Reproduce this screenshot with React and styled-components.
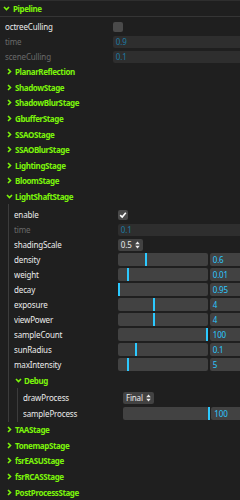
import React from "react";
import styled, { createGlobalStyle } from "styled-components";

const GlobalStyle = createGlobalStyle`
  html, body {
    margin: 0;
    padding: 0;
    background: #1f1f1f;
    overflow: hidden;
  }
  body {
    font-family: "Noto Sans", "Open Sans", sans-serif;
    font-size: 8px;
    letter-spacing: -0.15px;
    color: #ebebeb;
  }
`;

const Gui = styled.div`
  width: 250px;
  background: #1f1f1f;
`;

const RootTitle = styled.div`
  display: flex;
  align-items: center;
  gap: 3px;
  height: 15px;
  padding-left: 3px;
  border-top: 1px solid #2e2e2e;
  border-bottom: 1px solid #353535;
  color: #7cf50a;
  font-weight: 700;
  letter-spacing: -0.4px;
`;

const RootChildren = styled.div`
  padding: 2px 0 0 5px;
`;

const Title = styled.div`
  display: flex;
  align-items: center;
  gap: 2px;
  height: 15.6px;
  padding-left: 1px;
  color: #7cf50a;
  font-weight: 700;
  letter-spacing: -0.4px;
`;

const Children = styled.div`
  margin-left: 3px;
  padding: ${(p) => p.$pad || "3px 0 0 5px"};
  border-left: 1px solid #3c3c3c;
`;

const Row = styled.div`
  display: flex;
  align-items: center;
  height: ${(p) => p.$h || 15}px;
`;

const Label = styled.div`
  flex: 0 0 44%;
  white-space: nowrap;
  overflow: hidden;
  color: ${(p) => (p.$disabled ? "#6a6a6a" : "#ebebeb")};
`;

const Widget = styled.div`
  flex: 1;
  display: flex;
  align-items: center;
  gap: 2px;
  min-width: 0;
`;

const Check = styled.div`
  width: 10px;
  height: 10px;
  border-radius: 2px;
  background: #4a4a4a;
  display: flex;
  align-items: center;
  justify-content: center;
`;

const TextBox = styled.div`
  flex: 1;
  height: 12px;
  line-height: 12px;
  padding-left: 3px;
  border-radius: 2px;
  background: ${(p) => (p.$disabled ? "#2e2e2e" : "#424242")};
  color: ${(p) => (p.$disabled ? "#1d7aa3" : "#2cc9ff")};
`;

const SliderTrack = styled.div`
  flex: 0 0 68%;
  height: 13px;
  border-radius: 2px;
  background: #424242;
  position: relative;
`;

const Handle = styled.div`
  position: absolute;
  top: 0;
  bottom: 0;
  width: 2px;
  background: #2cc9ff;
`;

const NumberBox = styled.div`
  flex: 1;
  height: 13px;
  line-height: 13px;
  padding-left: 3px;
  border-radius: 2px;
  background: #424242;
  color: #2cc9ff;
`;

const Select = styled.div`
  display: flex;
  align-items: center;
  gap: 3px;
  height: 12px;
  padding: 0 3px;
  border-radius: 2px;
  background: #424242;
  color: #ebebeb;
`;

const Chevron = ({ open }) => (
  <svg width="7" height="7" viewBox="0 0 7 7">
    <polyline
      points={open ? "1,2 3.5,4.5 6,2" : "2,1 4.5,3.5 2,6"}
      fill="none"
      stroke="#7cf50a"
      strokeWidth="1.6"
    />
  </svg>
);

const Arrows = () => (
  <svg width="5" height="8" viewBox="0 0 5 8">
    <polygon points="2.5,0.5 4.8,3.2 0.2,3.2" fill="#ebebeb" />
    <polygon points="2.5,7.5 4.8,4.8 0.2,4.8" fill="#ebebeb" />
  </svg>
);

const CheckMark = () => (
  <svg width="8" height="8" viewBox="0 0 8 8">
    <polyline points="1.2,4.2 3.2,6 6.8,1.8" fill="none" stroke="#fff" strokeWidth="1.6" />
  </svg>
);

const Folder = ({ name }) => (
  <Title>
    <Chevron />
    {name}
  </Title>
);

const SliderRow = ({ label, value, pos }) => (
  <Row>
    <Label>{label}</Label>
    <Widget>
      <SliderTrack>
        <Handle style={{ left: `${pos * 100}%` }} />
      </SliderTrack>
      <NumberBox>{value}</NumberBox>
    </Widget>
  </Row>
);

const sliders = [
  ["density", "0.6", 0.3],
  ["weight", "0.01", 0.105],
  ["decay", "0.95", 0],
  ["exposure", "4", 0.39],
  ["viewPower", "4", 0.39],
  ["sampleCount", "100", 0.98],
  ["sunRadius", "0.1", 0.19],
  ["maxIntensity", "5", 0.105],
];

const before = [
  "PlanarReflection",
  "ShadowStage",
  "ShadowBlurStage",
  "GbufferStage",
  "SSAOStage",
  "SSAOBlurStage",
  "LightingStage",
  "BloomStage",
];

const after = ["TAAStage", "TonemapStage", "fsrEASUStage", "fsrRCASStage", "PostProcessStage"];

export default function App() {
  return (
    <>
      <GlobalStyle />
      <Gui>
        <RootTitle>
          <Chevron open />
          Pipeline
        </RootTitle>
        <RootChildren>
          <Row>
            <Label>octreeCulling</Label>
            <Widget>
              <Check />
            </Widget>
          </Row>
          <Row>
            <Label $disabled>time</Label>
            <Widget>
              <TextBox $disabled>0.9</TextBox>
            </Widget>
          </Row>
          <Row>
            <Label $disabled>sceneCulling</Label>
            <Widget>
              <TextBox $disabled>0.1</TextBox>
            </Widget>
          </Row>
          {before.map((n) => (
            <Folder key={n} name={n} />
          ))}
          <Title>
            <Chevron open />
            LightShaftStage
          </Title>
          <Children>
            <Row>
              <Label>enable</Label>
              <Widget>
                <Check>
                  <CheckMark />
                </Check>
              </Widget>
            </Row>
            <Row>
              <Label $disabled>time</Label>
              <Widget>
                <TextBox $disabled>0.1</TextBox>
              </Widget>
            </Row>
            <Row>
              <Label>shadingScale</Label>
              <Widget>
                <Select>
                  0.5
                  <Arrows />
                </Select>
              </Widget>
            </Row>
            {sliders.map(([l, v, p]) => (
              <SliderRow key={l} label={l} value={v} pos={p} />
            ))}
            <Title>
              <Chevron open />
              Debug
            </Title>
            <Children $pad="2px 0 1px 5px">
              <Row $h={16}>
                <Label>drawProcess</Label>
                <Widget>
                  <Select>
                    Final
                    <Arrows />
                  </Select>
                </Widget>
              </Row>
              <SliderRow label="sampleProcess" value="100" pos={0.98} />
            </Children>
          </Children>
          {after.map((n) => (
            <Folder key={n} name={n} />
          ))}
        </RootChildren>
      </Gui>
    </>
  );
}
